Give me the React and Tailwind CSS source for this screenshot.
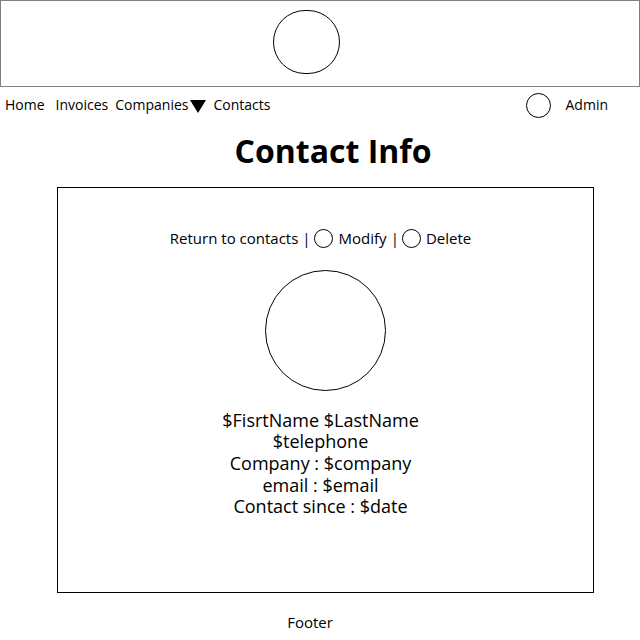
export default function App() {
  return (
    <div className="w-[640px] h-[640px] bg-white text-black font-['Open_Sans',sans-serif] relative overflow-hidden">
      {/* Header banner */}
      <div className="h-[87px] border border-[#808080] flex items-start">
        <div className="ml-[272px] mt-[9px] w-[67px] h-[64px] rounded-full border border-black" />
      </div>

      {/* Nav */}
      <div className="h-[38px] flex items-center text-[14px] pl-[5px] pr-[32px] -mt-[2px]">
        <span>Home</span>
        <span className="ml-[11px]">Invoices</span>
        <span className="ml-[7px]">Companies</span>
        <span className="ml-[2px] mt-[4px] w-0 h-0 border-l-[8px] border-r-[8px] border-t-[13px] border-l-transparent border-r-transparent border-t-black" />
        <span className="ml-[7px]">Contacts</span>
        <div className="ml-auto mt-[2px] w-[25px] h-[25px] rounded-full border border-black" />
        <span className="ml-[15px]">Admin</span>
      </div>

      {/* Title */}
      <h1 className="text-center text-[32px] font-bold leading-none mt-[12px] pl-[26px]">Contact Info</h1>

      {/* Card */}
      <div className="ml-[57px] mt-[20px] w-[537px] h-[406px] border border-black flex flex-col items-center">
        <div className="mt-[39px] flex items-center text-[15px] -ml-[10px]">
          <span>Return to contacts</span>
          <span className="ml-[4px]">|</span>
          <span className="ml-[3px] w-[19px] h-[19px] rounded-full border border-black" />
          <span className="ml-[6px]">Modify</span>
          <span className="ml-[4px]">|</span>
          <span className="ml-[3px] w-[19px] h-[19px] rounded-full border border-black" />
          <span className="ml-[5px]">Delete</span>
        </div>
        <div className="mt-[20px] ml-[0px] w-[121px] h-[121px] rounded-full border border-black" />
        <div className="mt-[19px] -ml-[10px] text-center text-[18px] leading-[21.7px]">
          <div>$FisrtName $LastName</div>
          <div>$telephone</div>
          <div>Company : $company</div>
          <div>email : $email</div>
          <div>Contact since : $date</div>
        </div>
      </div>

      {/* Footer */}
      <div className="mt-[18px] text-center text-[15px] -ml-[20px]">Footer</div>
    </div>
  );
}
